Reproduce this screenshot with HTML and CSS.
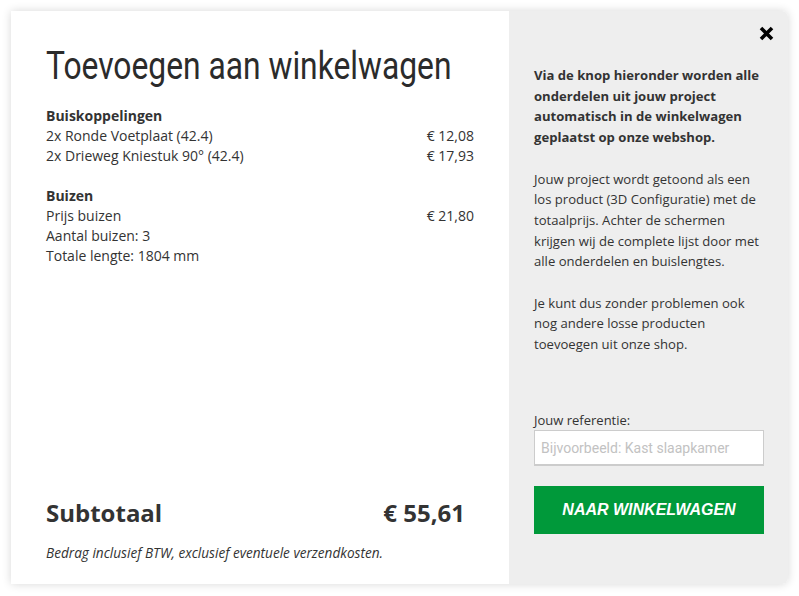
FILE: index.html
```html
<!DOCTYPE html>
<html lang="nl">
<head>
<meta charset="utf-8">
<title>Toevoegen aan winkelwagen</title>
<link rel="stylesheet" href="styles.css">
</head>
<body>
<div class="modal">
  <section class="summary">
    <h1 class="title">Toevoegen aan winkelwagen</h1>
    <div class="group">
      <div class="group-title">Buiskoppelingen</div>
      <div class="row"><span>2x Ronde Voetplaat (42.4)</span><span>€ 12,08</span></div>
      <div class="row"><span>2x Drieweg Kniestuk 90° (42.4)</span><span>€ 17,93</span></div>
    </div>
    <div class="group">
      <div class="group-title">Buizen</div>
      <div class="row"><span>Prijs buizen</span><span>€ 21,80</span></div>
      <div class="row"><span>Aantal buizen: 3</span></div>
      <div class="row"><span>Totale lengte: 1804 mm</span></div>
    </div>
    <div class="totals">
      <div class="subtotal"><span>Subtotaal</span><span>€ 55,61</span></div>
      <p class="note">Bedrag inclusief BTW, exclusief eventuele verzendkosten.</p>
    </div>
  </section>
  <aside class="side">
    <button class="close" aria-label="Sluiten">
      <svg width="15" height="15" viewBox="0 0 15 15"><path d="M2 2 L13 13 M13 2 L2 13" stroke="#000" stroke-width="3.6" stroke-linecap="butt"/></svg>
    </button>
    <p class="intro strong">Via de knop hieronder worden alle onderdelen uit jouw project automatisch in de winkelwagen geplaatst op onze webshop.</p>
    <p class="intro">Jouw project wordt getoond als een los product (3D Configuratie) met de totaalprijs. Achter de schermen krijgen wij de complete lijst door met alle onderdelen en buislengtes.</p>
    <p class="intro">Je kunt dus zonder problemen ook nog andere losse producten toevoegen uit onze shop.</p>
    <form class="form">
      <label class="label" for="ref">Jouw referentie:</label>
      <input class="input" id="ref" type="text" placeholder="Bijvoorbeeld: Kast slaapkamer">
      <button class="cta" type="button">NAAR WINKELWAGEN</button>
    </form>
  </aside>
</div>
</body>
</html>
```
FILE: styles.css
```css
* { box-sizing: border-box; }
html, body { margin: 0; padding: 0; background: #ffffff; }
body {
  font-family: "Open Sans", "Liberation Sans", sans-serif;
  color: #333333;
  font-size: 14px;
}
.modal {
  margin: 11px;
  width: 777px;
  height: 573px;
  display: flex;
  box-shadow: 0 0 10px rgba(0, 0, 0, 0.16);
  border-radius: 0 6px 6px 0;
}
.summary {
  width: 498px;
  background: #ffffff;
  padding: 33px 35px 21px 35px;
  display: flex;
  flex-direction: column;
}
.title {
  margin: 0 0 18px 0;
  font-family: Roboto, "Liberation Sans", sans-serif;
  font-weight: 400;
  font-size: 39px;
  line-height: 44px;
  color: #2b2b2b;
  white-space: nowrap;
  transform: scaleX(0.815);
  transform-origin: left center;
}
.group { margin-bottom: 20px; }
.group-title { font-weight: 700; line-height: 20px; }
.row {
  display: flex;
  justify-content: space-between;
  line-height: 20px;
}
.totals { margin-top: auto; }
.subtotal {
  display: flex;
  justify-content: space-between;
  font-weight: 700;
  font-size: 24px;
  line-height: 33px;
  margin-right: 9px;
}
.note {
  margin: 14px 0 0 0;
  font-style: italic;
  font-size: 13.6px;
  line-height: 20px;
}
.side {
  position: relative;
  flex: 1;
  background: #eeeeee;
  border-radius: 0 6px 6px 0;
  padding: 54px 24px 50px 25px;
  display: flex;
  flex-direction: column;
}
.close {
  position: absolute;
  top: 15px;
  right: 14px;
  width: 15px;
  height: 15px;
  padding: 0;
  border: 0;
  background: none;
  cursor: pointer;
  display: block;
}
.close svg { display: block; }
.intro {
  margin: 0 0 20.7px 0;
  font-size: 13.1px;
  line-height: 20.7px;
}
.intro:last-of-type { margin-bottom: 0; }
.strong { font-weight: 700; }
.form {
  margin-top: auto;
  display: flex;
  flex-direction: column;
}
.label {
  font-size: 13px;
  line-height: 18px;
  margin-bottom: 1px;
}
.input {
  height: 36px;
  width: 100%;
  border: 1px solid #cccccc;
  border-bottom-width: 2px;
  background: #ffffff;
  padding: 0 6px;
  font-family: Roboto, "Liberation Sans", sans-serif;
  font-size: 14px;
  color: #333333;
  outline: none;
}
.input::placeholder { color: #c2c2c2; }
.cta {
  margin-top: 20px;
  height: 48px;
  width: 100%;
  border: 0;
  background: #00993a;
  color: #ffffff;
  font-family: "Liberation Sans", Arial, sans-serif;
  font-weight: 700;
  font-style: italic;
  font-size: 16px;
  cursor: pointer;
}
```
